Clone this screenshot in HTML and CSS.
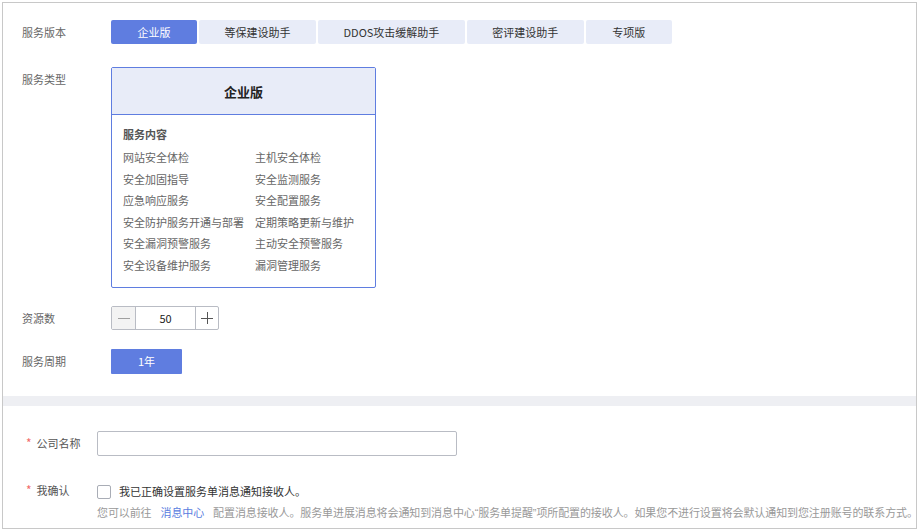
FILE: index.html
```html
<!DOCTYPE html>
<html lang="zh-CN">
<head>
<meta charset="utf-8">
<title>服务版本</title>
<link rel="stylesheet" href="styles.css">
</head>
<body>
<div class="panel">
  <section class="sec1">
    <div class="row row-ver">
      <div class="label">服务版本</div>
      <div class="tabs">
        <div class="tab active">企业版</div>
        <div class="tab">等保建设助手</div>
        <div class="tab">DDOS攻击缓解助手</div>
        <div class="tab">密评建设助手</div>
        <div class="tab">专项版</div>
      </div>
    </div>
    <div class="row row-type">
      <div class="label">服务类型</div>
      <div class="card">
        <div class="card-head">企业版</div>
        <div class="card-body">
          <div class="card-title">服务内容</div>
          <div class="items">
            <span>网站安全体检</span><span>主机安全体检</span>
            <span>安全加固指导</span><span>安全监测服务</span>
            <span>应急响应服务</span><span>安全配置服务</span>
            <span>安全防护服务开通与部署</span><span>定期策略更新与维护</span>
            <span>安全漏洞预警服务</span><span>主动安全预警服务</span>
            <span>安全设备维护服务</span><span>漏洞管理服务</span>
          </div>
        </div>
      </div>
    </div>
    <div class="row row-res">
      <div class="label">资源数</div>
      <div class="stepper">
        <div class="step minus"><svg width="12" height="12" viewBox="0 0 12 12"><path d="M0 6.5h12" stroke="#a0a0a0" stroke-width="1"/></svg></div>
        <div class="step-val">50</div>
        <div class="step plus"><svg width="12" height="12" viewBox="0 0 12 12"><path d="M0 6.5h12M6.5 0v12" stroke="#555" stroke-width="1"/></svg></div>
      </div>
    </div>
    <div class="row row-period">
      <div class="label">服务周期</div>
      <div class="period-btn">1年</div>
    </div>
  </section>
  <div class="band"></div>
  <section class="sec2">
    <div class="frow frow-name">
      <div class="flabel"><span class="star">*</span>公司名称</div>
      <div class="text-input"></div>
    </div>
    <div class="frow frow-confirm">
      <div class="flabel"><span class="star">*</span>我确认</div>
      <div class="confirm">
        <div class="check-line"><span class="checkbox"></span><span class="check-text">我已正确设置服务单消息通知接收人。</span></div>
        <div class="desc">您可以前往<span class="link">消息中心</span>配置消息接收人。服务单进展消息将会通知到消息中心<span class="q">“</span>服务单提醒<span class="q">”</span>项所配置的接收人。如果您不进行设置将会默认通知到您注册账号的联系方式。</div>
      </div>
    </div>
  </section>
</div>
</body>
</html>
```
FILE: styles.css
```css
* { box-sizing: border-box; }
html, body { margin: 0; padding: 0; background: #fff; }
body {
  font-family: "Noto Sans CJK SC", "Liberation Sans", sans-serif;
  font-size: 11px;
  color: #333;
}
.panel {
  margin: 2px 0 0 2px;
  width: 915px;
  height: 527px;
  border: 1px solid #c8c8c8;
  display: flex;
  flex-direction: column;
}
.sec1 {
  padding: 17px 0 0 19px;
  height: 393px;
}
.row { display: flex; align-items: flex-start; }
.label {
  width: 89px;
  flex: none;
  line-height: 24px;
  color: #666;
}
.tabs { display: flex; gap: 2px; }
.tab {
  height: 24px;
  line-height: 24px;
  padding: 0 25.5px;
  min-width: 86px;
  text-align: center;
  background: #e8ecf8;
  color: #333;
  border-radius: 2px;
  white-space: nowrap;
}
.tab.active { background: #5f7de0; color: #fff; }
.row-type { margin-top: 23px; }
.card {
  width: 265px;
  height: 221px;
  border: 1px solid #5f7de0;
  border-radius: 2px;
  display: flex;
  flex-direction: column;
}
.card-head {
  height: 47px;
  flex: none;
  background: #e8ecf8;
  border-bottom: 1px solid #5f7de0;
  display: flex;
  align-items: center;
  justify-content: center;
  font-size: 13px;
  font-weight: bold;
  color: #222;
}
.card-body { padding: 9px 0 0 11px; color: #666; line-height: 21.6px; }
.card-title { font-weight: bold; color: #555; margin-bottom: 1.5px; }
.items { display: grid; grid-template-columns: 132px 120px; white-space: nowrap; }
.row-res { margin-top: 18px; }
.stepper {
  display: flex;
  height: 24px;
  border: 1px solid #b9bcc4;
  border-radius: 2px;
}
.step {
  width: 23px;
  display: flex;
  align-items: center;
  justify-content: center;
}
.minus { background: #f3f3f3; border-right: 1px solid #b9bcc4; width: 24px; }
.plus { border-left: 1px solid #b9bcc4; }
.step-val {
  width: 59px;
  text-align: center;
  line-height: 22px;
  color: #222;
}
.row-period { margin-top: 19px; }
.period-btn {
  width: 71px;
  height: 25px;
  line-height: 25px;
  text-align: center;
  background: #5f7de0;
  color: #fff;
  border-radius: 1px;
}
.band { height: 10px; background: #eeeff3; flex: none; }
.sec2 { padding: 25px 0 0 23px; }
.frow { display: flex; align-items: flex-start; }
.flabel {
  width: 71px;
  flex: none;
  line-height: 24px;
  color: #555;
}
.star { color: #f26b6b; margin-right: 5px; font-size: 12px; }
.text-input {
  width: 360px;
  height: 25px;
  border: 1px solid #b9bcc4;
  border-radius: 2px;
}
.frow-confirm { margin-top: 22px; }
.check-line { display: flex; align-items: center; height: 26px; }
.checkbox {
  width: 14px;
  height: 14px;
  border: 1px solid #a9adb6;
  border-radius: 2px;
  margin-right: 8px;
  margin-top: 2px;
}
.check-text { color: #333; }
.desc { color: #999; line-height: 16px; white-space: nowrap; letter-spacing: -0.1px; }
.q { font-family: "Liberation Sans", sans-serif; }
.link { color: #5a7de0; margin: 0 9px; }
```
